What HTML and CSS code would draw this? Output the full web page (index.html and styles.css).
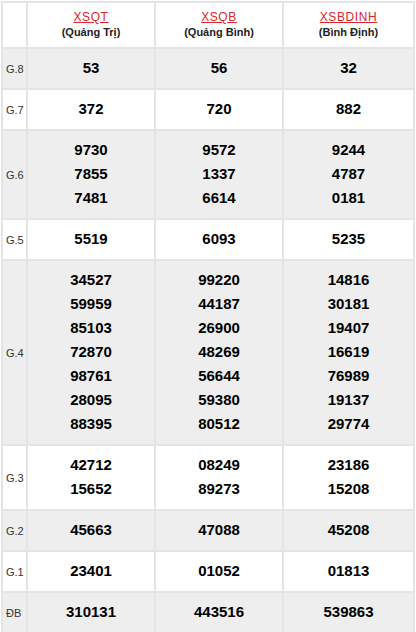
FILE: index.html
```html
<!DOCTYPE html>
<html lang="vi">
<head>
<meta charset="utf-8">
<title>KQXS Miền Trung</title>
<link rel="stylesheet" href="styles.css">
</head>
<body>
<div class="wrap">
<table class="kq">
  <colgroup>
    <col class="c-label">
    <col class="c-prov">
    <col class="c-prov">
    <col class="c-prov3">
  </colgroup>
  <thead>
    <tr>
      <th class="lbl"></th>
      <th><a class="code" href="#">XSQT</a><span class="prov">(Quảng Trị)</span></th>
      <th><a class="code" href="#">XSQB</a><span class="prov">(Quảng Bình)</span></th>
      <th><a class="code" href="#">XSBDINH</a><span class="prov">(Bình Định)</span></th>
    </tr>
  </thead>
  <tbody>
    <tr class="alt">
      <td class="lbl">G.8</td>
      <td><div>53</div></td><td><div>56</div></td><td><div>32</div></td>
    </tr>
    <tr>
      <td class="lbl">G.7</td>
      <td><div>372</div></td><td><div>720</div></td><td><div>882</div></td>
    </tr>
    <tr class="alt">
      <td class="lbl">G.6</td>
      <td><div>9730</div><div>7855</div><div>7481</div></td>
      <td><div>9572</div><div>1337</div><div>6614</div></td>
      <td><div>9244</div><div>4787</div><div>0181</div></td>
    </tr>
    <tr>
      <td class="lbl">G.5</td>
      <td><div>5519</div></td><td><div>6093</div></td><td><div>5235</div></td>
    </tr>
    <tr class="alt">
      <td class="lbl">G.4</td>
      <td><div>34527</div><div>59959</div><div>85103</div><div>72870</div><div>98761</div><div>28095</div><div>88395</div></td>
      <td><div>99220</div><div>44187</div><div>26900</div><div>48269</div><div>56644</div><div>59380</div><div>80512</div></td>
      <td><div>14816</div><div>30181</div><div>19407</div><div>16619</div><div>76989</div><div>19137</div><div>29774</div></td>
    </tr>
    <tr>
      <td class="lbl">G.3</td>
      <td><div>42712</div><div>15652</div></td>
      <td><div>08249</div><div>89273</div></td>
      <td><div>23186</div><div>15208</div></td>
    </tr>
    <tr class="alt">
      <td class="lbl">G.2</td>
      <td><div>45663</div></td><td><div>47088</div></td><td><div>45208</div></td>
    </tr>
    <tr>
      <td class="lbl">G.1</td>
      <td><div>23401</div></td><td><div>01052</div></td><td><div>01813</div></td>
    </tr>
    <tr class="alt">
      <td class="lbl">ĐB</td>
      <td><div>310131</div></td><td><div>443516</div></td><td><div>539863</div></td>
    </tr>
  </tbody>
</table>
</div>
</body>
</html>
```
FILE: styles.css
```css
* { box-sizing: border-box; }
html, body { margin: 0; padding: 0; background: #fff; }
body { font-family: "Liberation Sans", Arial, sans-serif; color: #000; }

.wrap { padding: 1px 1px 0 1px; }

.kq {
  width: 414px;
  border-collapse: collapse;
  table-layout: fixed;
  border: 2px solid #e4e4e4;
}
.c-label { width: 25px; }
.c-prov { width: 128px; }
.c-prov3 { width: 131px; }

.kq th, .kq td {
  border: 2px solid #e4e4e4;
  text-align: center;
  vertical-align: middle;
}

.kq th {
  height: 46px;
  padding: 0 2px;
  font-weight: normal;
  line-height: 15px;
}
.code {
  display: block;
  color: #d9262b;
  font-size: 12px;
  letter-spacing: 0.6px;
  text-decoration: underline;
}
.prov {
  display: block;
  color: #222;
  font-size: 11px;
  font-weight: bold;
}

.kq td {
  padding: 7px 2px 8px;
  font-size: 15px;
  font-weight: bold;
  line-height: 24px;
}
.kq td.lbl {
  text-align: left;
  padding: 0 0 0 3px;
  font-size: 11px;
  font-weight: normal;
  color: #333;
}
.alt td { background: #eeeeee; }
```
